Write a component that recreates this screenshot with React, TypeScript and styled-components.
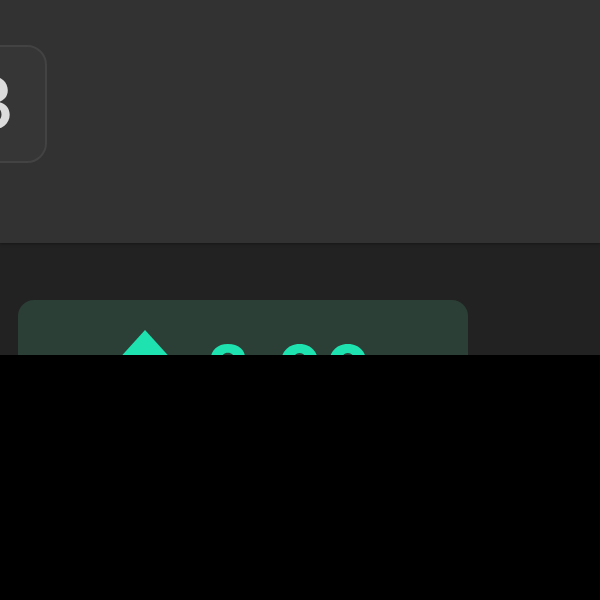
import styled, { createGlobalStyle } from 'styled-components';

const GlobalStyle = createGlobalStyle`
  html, body {
    margin: 0;
    padding: 0;
    background: #000;
  }
  body {
    font-family: Inter, "Noto Sans", sans-serif;
  }
`;

const Screen = styled.div`
  width: 600px;
  height: 355px;
  overflow: hidden;
  display: flex;
  flex-direction: column;
`;

const Header = styled.div`
  height: 243px;
  flex-shrink: 0;
  background: #323232;
  display: flex;
  align-items: flex-start;
  padding-top: 45px;
  box-sizing: border-box;
  box-shadow: 0 1px 3px rgba(0, 0, 0, 0.35);
  position: relative;
  z-index: 1;
`;

const NumberTile = styled.div`
  width: 118px;
  height: 118px;
  margin-left: -71px;
  box-sizing: border-box;
  border-radius: 20px;
  border: 2px solid #434343;
  background: #363636;
  display: flex;
  align-items: center;
  justify-content: center;
  color: #dcdcdc;
  font-size: 72px;
  font-weight: 500;
  line-height: 1;
  padding-left: 6px;
  padding-bottom: 2px;
`;

const Body = styled.div`
  flex: 1;
  background: #222222;
  padding: 57px 18px 0;
`;

const ChangeCard = styled.div`
  width: 450px;
  height: 120px;
  border-radius: 16px;
  background: #2c3f36;
  display: flex;
  align-items: flex-start;
  gap: 34px;
  padding: 30px 0 0 98px;
  box-sizing: border-box;
`;

const Arrow = styled.svg`
  width: 58px;
  height: 42px;
  flex-shrink: 0;
`;

const ChangeValue = styled.span`
  color: #1ee3b0;
  font-size: 64px;
  font-weight: 800;
  line-height: 1;
  letter-spacing: 4px;
  margin-top: 7px;
`;

export default function App() {
  return (
    <>
      <GlobalStyle />
      <Screen>
        <Header>
          <NumberTile>3</NumberTile>
        </Header>
        <Body>
          <ChangeCard>
            <Arrow viewBox="0 0 58 42">
              <path d="M29 0 L58 32 L0 32 Z" fill="#1ee3b0" />
            </Arrow>
            <ChangeValue>2.00</ChangeValue>
          </ChangeCard>
        </Body>
      </Screen>
    </>
  );
}
